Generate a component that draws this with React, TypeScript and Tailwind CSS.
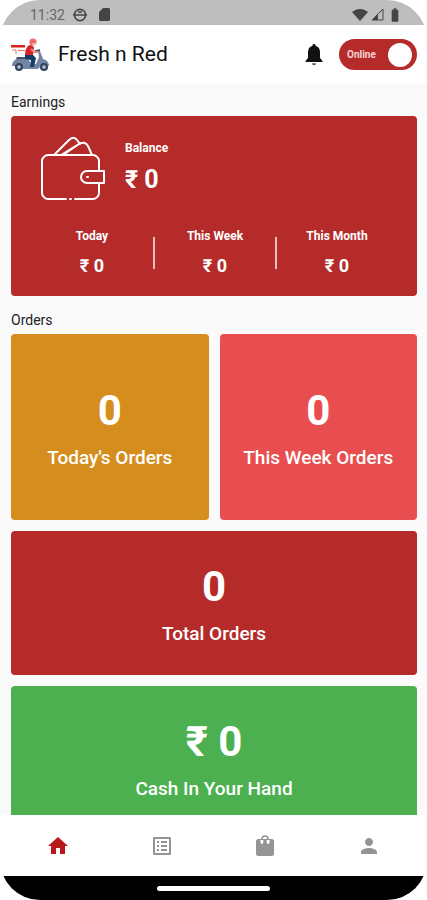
import { useState } from "react";
import { MdBatteryFull, MdHome, MdListAlt, MdPerson } from "react-icons/md";

interface Earning {
  label: string;
  value: string;
}
interface OrderCard {
  label: string;
  value: string;
  style: string;
}

const earnings: Earning[] = [
  { label: "Today", value: "₹ 0" },
  { label: "This Week", value: "₹ 0" },
  { label: "This Month", value: "₹ 0" },
];

const orderCards: OrderCard[] = [
  { label: "Today's Orders", value: "0", style: "h-[186px] bg-[#d58d1e]" },
  { label: "This Week Orders", value: "0", style: "h-[186px] bg-[#e84e4f]" },
  { label: "Total Orders", value: "0", style: "col-span-2 h-36 bg-[#b52b2a]" },
  { label: "Cash In Your Hand", value: "₹ 0", style: "col-span-2 h-36 bg-[#4cb050]" },
];

function BagIcon({ className }: { className?: string }) {
  return (
    <svg viewBox="0 0 24 24" className={className} aria-hidden="true">
      <path d="M5 5h14c1 0 2 1 2 2v13c0 1-1 2-2 2H5c-1 0-2-1-2-2V7c0-1 1-2 2-2z" fill="currentColor" />
      <path d="M9 5c0-4 6-4 6 0" fill="none" stroke="currentColor" strokeWidth="1.6" />
      <path d="M7.5 6h2.8v2.6a1.4 1.4 0 0 1-2.8 0zM13.7 6h2.8v2.6a1.4 1.4 0 0 1-2.8 0z" fill="#fff" />
    </svg>
  );
}

const tabs = [
  { id: "home", label: "Home", Icon: MdHome },
  { id: "orders", label: "Orders", Icon: MdListAlt },
  { id: "bag", label: "Bag", Icon: BagIcon },
  { id: "profile", label: "Profile", Icon: MdPerson },
];

function ScooterLogo() {
  return (
    <svg viewBox="0 0 40 36" className="h-9 w-10" aria-hidden="true">
      <path d="M1 8h14v2.5H1z" fill="#d5201f" />
      <path d="M2 13h4v4M8 13.5h7" stroke="#e8705f" strokeWidth="1" fill="none" />
      {/* body and seat */}
      <path d="M2 29c0-5 4-8 9-8h7l3 6h5l3-7-1-6h2l3 8c4 1 6 4 6 7h-3c-2-2-5-2-6 1l-2 2H13l-1-3z" fill="#7385a0" />
      <path d="M7 20h10v2H6z" fill="#43536f" />
      <path d="M25 14l5-1" stroke="#34435f" strokeWidth="1.5" />
      <circle cx="9" cy="30" r="4" fill="#34435f" />
      <circle cx="9" cy="30" r="1.8" fill="#b8c4d4" />
      <circle cx="34" cy="30" r="4" fill="#34435f" />
      <circle cx="34" cy="30" r="1.8" fill="#b8c4d4" />
      {/* rider */}
      <path d="M15 18h8l3 3-2 9h-4l1-7-6-1z" fill="#153a68" />
      <path d="M15 18c0-5 2-10 6-10l3 2-1 8z" fill="#d8232a" />
      <path d="M21 12l3 3h4" stroke="#e58a80" strokeWidth="2" fill="none" />
      <circle cx="23" cy="5" r="3.6" fill="#ef6b70" />
      <path d="M22 6h4v2h-3z" fill="#f3b9a5" />
    </svg>
  );
}

function BellIcon() {
  return (
    <svg viewBox="0 0 18 22" className="h-[22px] w-[18px]" fill="currentColor" aria-hidden="true">
      <path d="M9 0c1 0 1.5.7 1.5 1.7C13.5 2.5 15 5 15 8v6l2.5 3v1H.5v-1L3 14V8c0-3 1.5-5.5 4.5-6.3C7.5.7 8 0 9 0z" />
      <path d="M7 19.3h4a2 2 0 0 1-4 0z" fill="#555" />
    </svg>
  );
}

function WalletIcon() {
  return (
    <svg viewBox="0 0 64 66" className="h-[66px] w-16" fill="none" stroke="#fff" strokeWidth="2" strokeLinecap="round" strokeLinejoin="round" aria-hidden="true">
      <path d="M25 63H7c-3 0-6-3-6-6V25c0-3 3-6 6-6h45c3 0 6 3 6 6v10M58 47v10c0 3-3 6-6 6H34" />
      <path d="M29 63h1" />
      <path d="M63 35H46a6 6 0 0 0 0 12h17z" />
      <path d="M46 41h1" />
      <path d="M13 19 28 4c3-3 6-3 8 0l3 4M22 19 38 8c4-2 7-2 9 2l4 9M20 19 38 8" />
    </svg>
  );
}

function StatusBar() {
  return (
    <div className="flex h-[25px] shrink-0 items-center justify-between bg-[#bebebe] pr-6 pl-[30px] text-[#444]">
      <div className="flex items-center gap-2 pt-1">
        <span className="text-sm text-[#666]">11:32</span>
        <svg viewBox="0 0 14 14" className="size-[14px]" fill="none" stroke="currentColor" strokeWidth="1.6" aria-hidden="true">
          <circle cx="7" cy="7" r="5.6" />
          <path d="M0 7h14M5 4h4" />
        </svg>
        <svg viewBox="0 0 11 13" className="ml-1 h-[13px] w-[11px]" aria-hidden="true">
          <path d="M4 0h6l1 1v11l-1 1H1l-1-1V4z" fill="currentColor" />
        </svg>
      </div>
      <div className="flex items-center gap-[3px] pt-1">
        <svg viewBox="0 0 16 14" className="h-[14px] w-4" aria-hidden="true">
          <path d="M0 4c5-4 11-4 16 0L8 13z" fill="currentColor" />
        </svg>
        <svg viewBox="0 0 13 13" className="size-[13px]" aria-hidden="true">
          <path d="M12 1v11H1z" fill="none" stroke="currentColor" />
          <path d="M7 6v6H1z" fill="currentColor" />
        </svg>
        <MdBatteryFull className="size-4" />
      </div>
    </div>
  );
}

export default function App() {
  const [online, setOnline] = useState(true);
  const [activeTab, setActiveTab] = useState("home");

  return (
    <div className="bg-white font-[Roboto,sans-serif]">
      <div className="flex h-screen flex-col overflow-hidden rounded-[40px] bg-[#fafafa]">
        <StatusBar />

        <header className="flex h-[59px] shrink-0 items-center bg-white px-[10px]">
          <ScooterLogo />
          <h1 className="ml-2 flex-1 text-[21px] text-[#111]">Fresh n Red</h1>
          <button aria-label="Notifications" className="mr-4 text-[#111]">
            <BellIcon />
          </button>
          <label className={`relative flex h-[31px] w-[78px] cursor-pointer items-center rounded-full pl-2 ${online ? "bg-[#b52b2a]" : "bg-gray-500"}`}>
            <input type="checkbox" role="switch" checked={online} onChange={() => setOnline(!online)} className="sr-only" />
            <span className="text-[10px] font-bold text-[#f6d5d5]">{online ? "Online" : "Offline"}</span>
            <span className="absolute right-[5px] size-6 rounded-full bg-white" />
          </label>
        </header>

        <main className="flex-1 overflow-y-auto pt-2 pr-[10px] pl-[11px] [scrollbar-width:none]">
          <h2 className="mb-1 text-sm leading-5 text-[#222]">Earnings</h2>
          <section className="h-[180px] rounded bg-[#b52b2a] text-white">
            <div className="flex gap-5 pt-5 pl-[30px]">
              <WalletIcon />
              <div className="pt-1">
                <div className="text-xs leading-4 font-bold">Balance</div>
                <div className="mt-[10px] text-[25px] leading-7 font-bold">₹ 0</div>
              </div>
            </div>
            <div className="mt-[26px] flex items-center px-5">
              {earnings.map((e, i) => (
                <div key={e.label} className="flex flex-1 items-center">
                  {i > 0 && <div className="h-8 w-[2px] bg-white/70" />}
                  <div className="flex-1 text-center">
                    <div className="text-xs leading-4 font-bold">{e.label}</div>
                    <div className="mt-[10px] text-lg leading-6 font-bold">{e.value}</div>
                  </div>
                </div>
              ))}
            </div>
          </section>

          <h2 className="mt-[14px] mb-1 text-sm leading-5 text-[#222]">Orders</h2>
          <section className="grid grid-cols-2 gap-[11px]">
            {orderCards.map((c) => (
              <div key={c.label} className={`flex flex-col items-center justify-center rounded pt-[2px] text-white ${c.style}`}>
                <div className="text-[42px] leading-[50px] font-bold">{c.value}</div>
                <div className="mt-[10px] text-[19px] leading-6 font-medium">{c.label}</div>
              </div>
            ))}
          </section>
        </main>

        <nav className="flex h-[61px] shrink-0 items-center bg-white px-[6px]">
          {tabs.map(({ id, label, Icon }) => (
            <button key={id} aria-label={label} onClick={() => setActiveTab(id)}
              className={`flex flex-1 justify-center ${activeTab === id ? "text-[#b8191c]" : "text-[#949494]"}`}>
              <Icon className="size-6" />
            </button>
          ))}
        </nav>

        <div className="flex h-6 shrink-0 items-center justify-center bg-black">
          <div className="h-[5px] w-[113px] rounded-full bg-white" />
        </div>
      </div>
    </div>
  );
}
